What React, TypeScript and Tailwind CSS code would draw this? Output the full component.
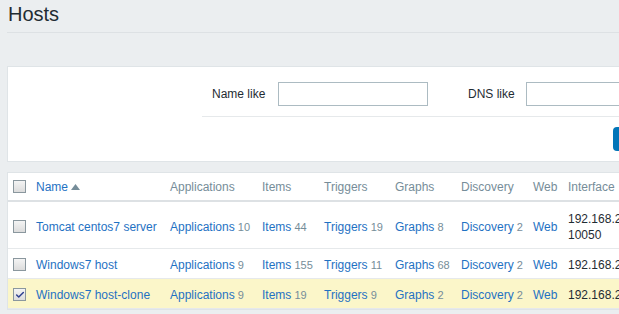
import { Check } from "lucide-react";

type Row = {
  name: string;
  apps: number;
  items: number;
  triggers: number;
  graphs: number;
  discovery: number;
  iface: string[];
  checked?: boolean;
};

const rows: Row[] = [
  { name: "Tomcat centos7 server", apps: 10, items: 44, triggers: 19, graphs: 8, discovery: 2, iface: ["192.168.229.130:", "10050"] },
  { name: "Windows7 host", apps: 9, items: 155, triggers: 11, graphs: 68, discovery: 2, iface: ["192.168.229.1: 10050"] },
  { name: "Windows7 host-clone", apps: 9, items: 19, triggers: 9, graphs: 2, discovery: 2, iface: ["192.168.229.1: 10050"], checked: true },
];

function Box({ checked }: { checked?: boolean }) {
  return (
    <span className="flex h-[13px] w-[13px] items-center justify-center border border-[#8a979e] bg-gradient-to-b from-[#f4f4f4] to-[#dcdcdc]">
      {checked && <Check className="h-[10px] w-[10px] text-[#2e3f8f]" strokeWidth={3.5} />}
    </span>
  );
}

function Link({ label, count }: { label: string; count?: number }) {
  return (
    <span className="whitespace-nowrap">
      <span className="text-[#1f72c3]">{label}</span>
      {count !== undefined && <span className="text-[11px] text-[#768d99]"> {count}</span>}
    </span>
  );
}

const cols = "grid grid-cols-[22px_134px_92px_62px_71px_66px_72px_35px_120px]";

export default function App() {
  return (
    <div className="h-[314px] w-[619px] overflow-hidden bg-[#ebeef0] font-['Liberation_Sans',Arial,sans-serif] text-[12px] text-[#1f2c33]">
      <div className="w-[760px]">
        <div className="ml-[7px] h-[33px] border-b border-[#dde1e4]">
          <h1 className="pl-px pt-[1px] text-[20px] leading-[26px] text-[#1f2c33]">Hosts</h1>
        </div>

        <div className="ml-[7px] mt-[33px] h-[96px] border border-[#dfe4e7] bg-white">
          <div className="ml-[194px] border-b border-[#e6e9eb] pt-[15px] pb-[10px]">
            <div className="flex items-center">
              <span className="ml-[10px] w-[66px]">Name like</span>
              <div className="h-[24px] w-[150px] border border-[#acbbc2]" />
              <span className="ml-[40px] w-[58px]">DNS like</span>
              <div className="h-[24px] w-[150px] border border-[#acbbc2]" />
            </div>
          </div>
          <div className="ml-[605px] mt-[10px] h-[24px] w-[60px] rounded-sm bg-[#0275b8]" />
        </div>

        <div className="ml-[7px] mt-[10px] border border-[#dfe4e7] bg-white">
          <div className={`${cols} h-[29px] items-center border-b-2 border-[#dde1e4] text-[#768d99]`}>
            <div className="pl-[5px]"><Box /></div>
            <div className="flex items-center pl-[6px] text-[#1f72c3]">
              Name
              <svg width="9" height="6" viewBox="0 0 9 6" className="ml-[3px]"><path d="M0 6 L4.5 0 L9 6 Z" fill="#768d99" /></svg>
            </div>
            <div className="pl-[6px]">Applications</div>
            <div className="pl-[6px]">Items</div>
            <div className="pl-[6px]">Triggers</div>
            <div className="pl-[6px]">Graphs</div>
            <div className="pl-[6px]">Discovery</div>
            <div className="pl-[6px]">Web</div>
            <div className="pl-[6px]">Interface</div>
          </div>
          {rows.map((r, i) => (
            <div
              key={r.name}
              className={`${cols} items-center border-b border-[#e6e9eb] ${i === 0 ? "h-[47px] pt-[3px]" : "h-[30px] pt-[2px]"} ${r.checked ? "bg-[#fbf6c9]" : ""}`}
            >
              <div className="pl-[5px]"><Box checked={r.checked} /></div>
              <div className="pl-[6px] whitespace-nowrap text-[#1f72c3]">{r.name}</div>
              <div className="pl-[6px]"><Link label="Applications" count={r.apps} /></div>
              <div className="pl-[6px]"><Link label="Items" count={r.items} /></div>
              <div className="pl-[6px]"><Link label="Triggers" count={r.triggers} /></div>
              <div className="pl-[6px]"><Link label="Graphs" count={r.graphs} /></div>
              <div className="pl-[6px]"><Link label="Discovery" count={r.discovery} /></div>
              <div className="pl-[6px]"><Link label="Web" /></div>
              <div className="pl-[6px] leading-[16px]">
                {r.iface.map((l) => (
                  <div key={l} className="whitespace-nowrap">{l}</div>
                ))}
              </div>
            </div>
          ))}
        </div>
      </div>
    </div>
  );
}
